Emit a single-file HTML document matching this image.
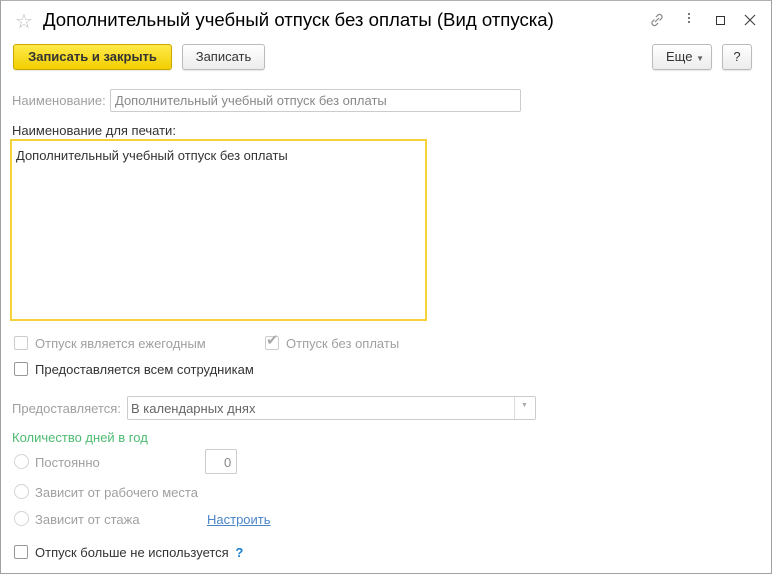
<!DOCTYPE html>
<html><head><meta charset="utf-8"><style>
*{box-sizing:border-box;margin:0;padding:0}
body{width:772px;height:574px;background:#fff;font-family:"Liberation Sans",Arial,sans-serif;font-size:13px;color:#333;position:relative;overflow:hidden}
.frame{position:absolute;left:0;top:0;width:772px;height:574px;border:1px solid #a0a0a0;border-top-color:#b0b0b0}
.a{position:absolute;white-space:nowrap}
.btn{position:absolute;border:1px solid #bbb;border-radius:3px;background:linear-gradient(#fff,#ececec);text-align:center;line-height:24px;box-shadow:0 1px 1px rgba(0,0,0,.1)}
.cb{position:absolute;width:14px;height:14px;border:1px solid #999;border-radius:2px;background:#fff}
.cb.d{border-color:#ccc}
.rd{position:absolute;width:15px;height:15px;border:1px solid #d4d4d4;border-radius:50%;background:#fff}
.gray{color:#a0a0a0}
.inp{position:absolute;border:1px solid #ccc;border-radius:2px;background:#fff}
</style></head><body>
<div class="frame"></div>
<div class="a" style="left:15px;top:9px;font-size:20px;color:#bbb">☆</div>
<div class="a" style="left:43px;top:9px;font-size:18.6px;color:#000">Дополнительный учебный отпуск без оплаты (Вид отпуска)</div>
<svg class="a" style="left:649px;top:12px" width="16" height="16" viewBox="0 0 16 16"><g fill="none" stroke="#888" stroke-width="1.2"><path d="M7 5l2-2a2.5 2.5 0 013.5 3.5l-2 2"/><path d="M9 11l-2 2a2.5 2.5 0 01-3.5-3.5l2-2"/><path d="M6 10l4-4"/></g></svg>
<div class="a" style="left:688px;top:13px;width:2px;height:2px;background:#777;box-shadow:0 4px #777,0 8px #777"></div>
<div class="a" style="left:716px;top:16px;width:9px;height:9px;border:1px solid #333"></div>
<svg class="a" style="left:744px;top:14px" width="12" height="12" viewBox="0 0 12 12"><path d="M1 1l10 10M11 1L1 11" stroke="#444" stroke-width="1.2"/></svg>
<div class="btn" style="left:13px;top:44px;width:159px;height:26px;background:linear-gradient(#ffe94a,#f2cf00);border-color:#c9a800;font-weight:bold;color:#333">Записать и закрыть</div>
<div class="btn" style="left:182px;top:44px;width:83px;height:26px">Записать</div>
<div class="btn" style="left:652px;top:44px;width:60px;height:26px;text-align:left;padding-left:13px">Еще <span style="font-size:8px;color:#666">▼</span></div>
<div class="btn" style="left:722px;top:44px;width:30px;height:26px">?</div>
<div class="a gray" style="left:12px;top:93px">Наименование:</div>
<div class="inp" style="left:110px;top:89px;width:411px;height:23px"></div>
<div class="a gray" style="left:115px;top:93px;color:#888">Дополнительный учебный отпуск без оплаты</div>
<div class="a" style="left:12px;top:123px">Наименование для печати:</div>
<div class="a" style="left:10px;top:139px;width:417px;height:182px;border:2px solid #f5d13a"></div>
<div class="a" style="left:16px;top:148px">Дополнительный учебный отпуск без оплаты</div>
<div class="cb d" style="left:14px;top:336px"></div>
<div class="a gray" style="left:35px;top:336px">Отпуск является ежегодным</div>
<div class="cb d" style="left:265px;top:336px"></div>
<div class="a" style="left:266px;top:331px;font-size:15px;color:#aaa">✔</div>
<div class="a gray" style="left:286px;top:336px">Отпуск без оплаты</div>
<div class="cb" style="left:14px;top:362px"></div>
<div class="a" style="left:35px;top:362px">Предоставляется всем сотрудникам</div>
<div class="a gray" style="left:12px;top:401px">Предоставляется:</div>
<div class="inp" style="left:127px;top:396px;width:409px;height:24px"></div>
<div class="a" style="left:514px;top:397px;width:1px;height:22px;background:#ddd"></div>
<div class="a" style="left:521px;top:402px;font-size:7px;color:#aaa">▼</div>
<div class="a" style="left:131px;top:401px;color:#666">В календарных днях</div>
<div class="a" style="left:12px;top:430px;color:#4cbb70">Количество дней в год</div>
<div class="rd" style="left:14px;top:454px"></div>
<div class="a gray" style="left:35px;top:455px">Постоянно</div>
<div class="inp" style="left:205px;top:449px;width:32px;height:25px"></div>
<div class="a gray" style="left:224px;top:455px;color:#888">0</div>
<div class="rd" style="left:14px;top:484px"></div>
<div class="a gray" style="left:35px;top:485px">Зависит от рабочего места</div>
<div class="rd" style="left:14px;top:511px"></div>
<div class="a gray" style="left:35px;top:512px">Зависит от стажа</div>
<div class="a" style="left:207px;top:512px;color:#4a85c8;text-decoration:underline">Настроить</div>
<div class="cb" style="left:14px;top:545px"></div>
<div class="a" style="left:35px;top:545px">Отпуск больше не используется <b style="color:#1a7fd0;margin-left:3px">?</b></div>
</body></html>
